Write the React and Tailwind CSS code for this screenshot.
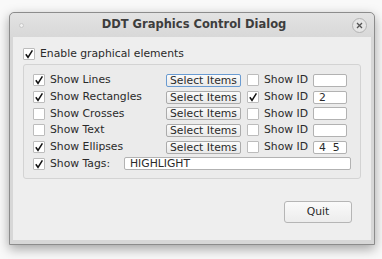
import React from "react";

function Check({ on }) {
  return (
    <span className="w-[12px] h-[12px] shrink-0 bg-white border border-[#bcbcbc] rounded-[1px] flex items-center justify-center">
      {on && (
        <svg width="10" height="10" viewBox="0 0 10 10">
          <path d="M1.8 5.2 L4 8.3 L8.4 1.3" fill="none" stroke="#111" strokeWidth="1.5" />
        </svg>
      )}
    </span>
  );
}

function SelectBtn({ focus }) {
  return (
    <button
      className={`w-[75px] h-[13px] shrink-0 rounded-[2px] border bg-gradient-to-b from-[#fbfbfb] to-[#e9e9e9] text-[10.8px] leading-[11px] text-[#2a2a2a] flex items-center justify-center ${
        focus ? "border-[#6a9bd1]" : "border-[#ababab]"
      }`}
    >
      Select Items
    </button>
  );
}

function Field({ value, className }) {
  return (
    <div
      className={`h-[13px] bg-white border border-[#b2b2b2] rounded-[2px] text-[10.8px] leading-[11px] text-[#2a2a2a] pl-[5px] whitespace-pre flex items-center ${className}`}
    >
      {value}
    </div>
  );
}

const rows = [
  { label: "Show Lines", on: true, id: false, val: "", focus: true },
  { label: "Show Rectangles", on: true, id: true, val: "2" },
  { label: "Show Crosses", on: false, id: false, val: "" },
  { label: "Show Text", on: false, id: false, val: "" },
  { label: "Show Ellipses", on: true, id: false, val: "4  5" },
];

export default function App() {
  return (
    <div className="w-[382px] h-[259px] bg-[#f9f9f9] pt-[12px] pl-[9px] font-['DejaVu_Sans',sans-serif] text-[#2a2a2a]">
      <div className="w-[366px] h-[233px] border border-[#8c8c8c] rounded-t-[5px] bg-[#d7d7d7] flex flex-col shadow-[0_4px_12px_rgba(0,0,0,0.35)]">
        {/* Title bar */}
        <div className="h-[24px] shrink-0 rounded-t-[5px] bg-gradient-to-b from-[#e3e3e3] to-[#d8d8d8] flex items-center pl-[9px] pr-[7px]">
          <span className="w-[5px] h-[5px] rounded-full bg-[#f0f0f0] border border-[#c8c8c8]" />
          <span className="flex-1 text-center text-[11.5px] font-bold text-[#3d3d3d] pl-[12px]">
            DDT Graphics Control Dialog
          </span>
          <span className="w-[15px] h-[15px] rounded-full border border-[#b3b3b3] bg-[#e6e6e6] flex items-center justify-center">
            <svg width="7" height="7" viewBox="0 0 7 7">
              <path d="M1 1 L6 6 M6 1 L1 6" stroke="#555" strokeWidth="1.3" />
            </svg>
          </span>
        </div>

        {/* Content */}
        <div className="flex-1 mx-[3px] mb-[4px] bg-[#eeeeee] flex flex-col px-[10px] pt-[11px]">
          <div className="flex items-center gap-[5px] h-[12px] text-[10.8px]">
            <Check on />
            <span>Enable graphical elements</span>
          </div>

          <div className="mt-[4px] w-[338px] h-[115px] border border-[#d3d3d3] rounded-[3px] bg-[#ebebeb] flex flex-col pt-[7px] pl-[9px] text-[10.8px]">
            {rows.map((r) => (
              <div key={r.label} className="h-[16.7px] flex items-center">
                <Check on={r.on} />
                <span className="w-[121px] pl-[5px] shrink-0">{r.label}</span>
                <SelectBtn focus={r.focus} />
                <span className="ml-[6px]">
                  <Check on={r.id} />
                </span>
                <span className="w-[54px] pl-[5px] shrink-0">Show ID</span>
                <Field value={r.val} className="w-[34px]" />
              </div>
            ))}
            <div className="h-[16.7px] flex items-center">
              <Check on />
              <span className="w-[79px] pl-[5px] shrink-0">Show Tags:</span>
              <Field value="HIGHLIGHT" className="w-[227px]" />
            </div>
          </div>

          <div className="flex justify-end mt-[22px] pr-[9px]">
            <button className="w-[68px] h-[22px] rounded-[3px] border border-[#b5b5b5] bg-gradient-to-b from-[#fafafa] to-[#ececec] text-[10.8px] text-[#2a2a2a]">
              Quit
            </button>
          </div>
        </div>
      </div>
    </div>
  );
}
